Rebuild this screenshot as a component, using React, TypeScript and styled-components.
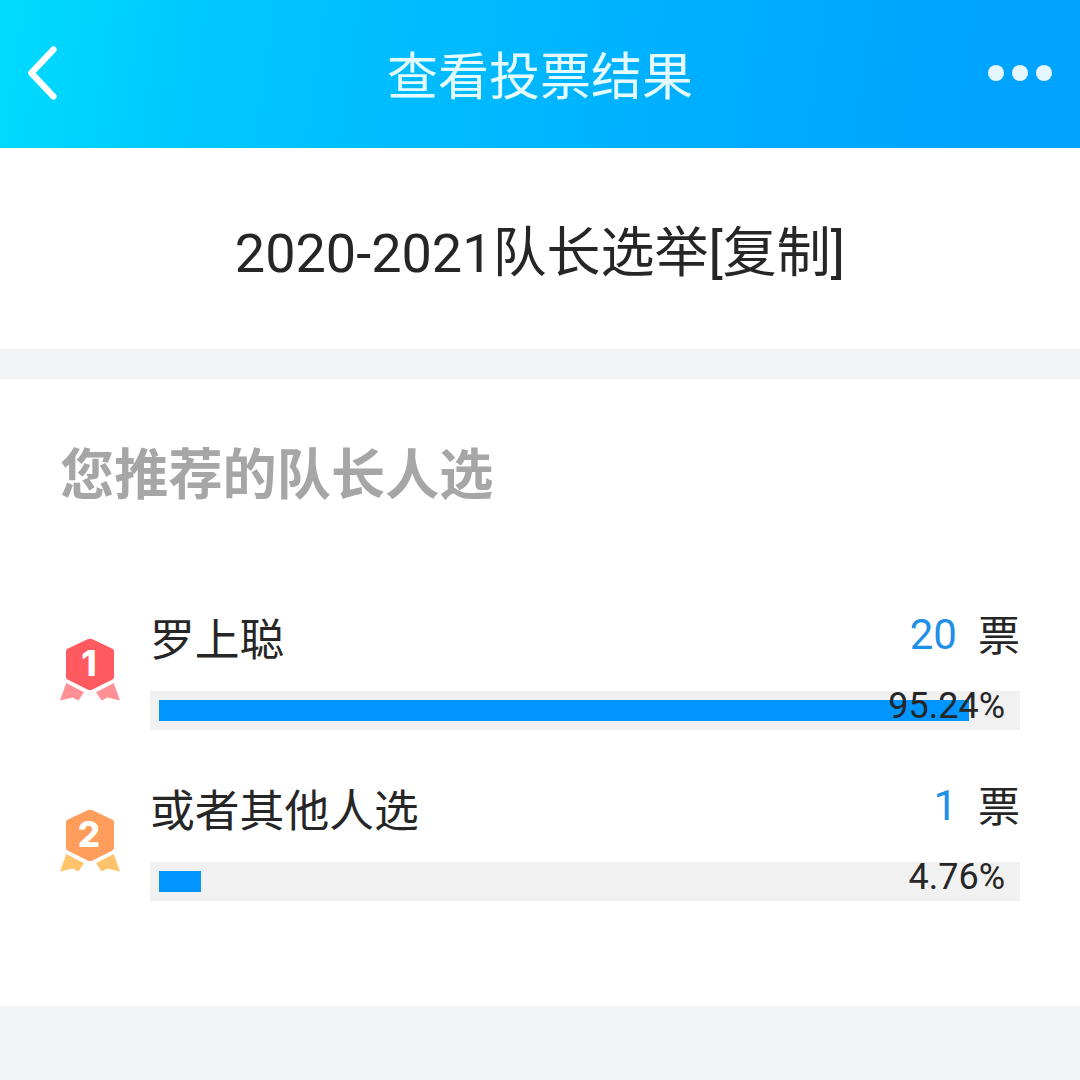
import React from "react";
import styled, { createGlobalStyle } from "styled-components";

const GlobalStyle = createGlobalStyle`
  * { box-sizing: border-box; }
  body {
    margin: 0;
    background: #f2f3f5;
    color: #262626;
    font-family: Roboto, "Noto Sans CJK SC", sans-serif;
  }
`;

const Page = styled.div`
  display: flex;
  flex-direction: column;
  width: 1080px;
  height: 1080px;
  overflow: hidden;
  background: #f2f3f5;
`;

const Header = styled.header`
  display: grid;
  grid-template-columns: 120px 1fr 120px;
  align-items: center;
  height: 148px;
  background: linear-gradient(98deg, #00dcff 0%, #00cbff 15%, #00beff 35%, #00aeff 65%, #00a5ff 85%, #00a3ff 100%);
`;

const HeaderTitle = styled.h1`
  margin: 8px 0 0;
  text-align: center;
  font-size: 51px;
  font-weight: 400;
  line-height: 74px;
  color: #e4fbff;
`;

const BackButton = styled.button`
  justify-self: start;
  display: flex;
  margin: 0 0 3px 22px;
  padding: 0;
  border: 0;
  background: none;
`;

const MoreButton = styled.button`
  justify-self: end;
  display: flex;
  gap: 8px;
  margin: 0 28px 2px 0;
  padding: 0;
  border: 0;
  background: none;
`;

const Dot = styled.span`
  width: 16px;
  height: 16px;
  border-radius: 50%;
  background: #e5f6ff;
`;

const TitleCard = styled.section`
  display: flex;
  align-items: center;
  justify-content: center;
  height: 201px;
  margin-bottom: 30px;
  padding-top: 10px;
  background: #fff;
`;

const PollTitle = styled.h2`
  margin: 0;
  font-size: 54px;
  font-weight: 400;
  line-height: 80px;
`;

const ResultCard = styled.section`
  height: 627px;
  padding: 57px 60px 0;
  background: #fff;
`;

const Question = styled.h3`
  margin: 0 0 89px;
  font-size: 54.2px;
  font-weight: 700;
  line-height: 80px;
  color: #a6a6a6;
`;

const Options = styled.ul`
  display: flex;
  flex-direction: column;
  gap: 46px;
  margin: 0;
  padding: 0;
  list-style: none;
`;

const Option = styled.li`
  display: grid;
  grid-template-columns: 60px 1fr;
  column-gap: 30px;
  height: 125px;
`;

const MedalSlot = styled.div`
  padding-top: 33px;
`;

const MedalIcon = styled.svg`
  display: block;
`;

const Rank = styled.text`
  font-family: Inter, Roboto, sans-serif;
  font-size: 35px;
  font-weight: 800;
  fill: #fff;
`;

const OptionBody = styled.div`
  display: flex;
  flex-direction: column;
  justify-content: space-between;
`;

const OptionHead = styled.div`
  display: flex;
  justify-content: space-between;
  height: 72px;
`;

const Name = styled.span`
  font-size: 44.8px;
  line-height: 72px;
`;

const Votes = styled.span`
  display: flex;
  gap: 21px;
  font-size: 42px;
  line-height: 60px;
`;

const Count = styled.span`
  color: #1e90e6;
`;

const Unit = styled.span`
  line-height: 64px;
`;

const Track = styled.div`
  position: relative;
  height: 39px;
  padding: 9px;
  background: #f1f1f1;
`;

const Fill = styled.div`
  height: 21px;
  background: #0095ff;
`;

const Percent = styled.span`
  position: absolute;
  top: -6px;
  right: 15px;
  font-size: 36px;
  line-height: 42px;
`;

const results = [
  { name: "罗上聪", votes: 20, percent: 95.24, color: "#ff5a5f", ribbon: "#ff9095" },
  { name: "或者其他人选", votes: 1, percent: 4.76, color: "#ff9e5c", ribbon: "#ffc46b" },
];

function Medal({ rank, color, ribbon }: { rank: number; color: string; ribbon: string }) {
  return (
    <MedalIcon width="60" height="64" viewBox="0 0 60 64">
      <path d="M6.3 45L24 54.3L18.3 62.5L12.5 59.5L0 62.5Z" fill={ribbon} />
      <path d="M53.7 45L36 54.3L41.7 62.5L47.5 59.5L60 62.5Z" fill={ribbon} />
      <path
        d="M27.5 1.2Q30 .1 32.5 1.2L52.5 10.8Q54 11.7 54 13.4V38.7Q54 40.6 52.4 41.5L32.5 51.5Q30 52.6 27.5 51.5L7.6 41.5Q6 40.6 6 38.7V13.4Q6 11.7 7.5 10.8Z"
        fill={color}
      />
      <Rank x="29" y="38" textAnchor="middle">
        {rank}
      </Rank>
    </MedalIcon>
  );
}

export default function App() {
  return (
    <>
      <GlobalStyle />
      <Page>
        <Header>
          <BackButton aria-label="返回">
            <svg width="40" height="60" viewBox="0 0 40 60" fill="none" stroke="#fff" strokeWidth="6.2" strokeLinecap="round" strokeLinejoin="round">
              <path d="M31.5 6.5L9.3 30L31.5 53.5" />
            </svg>
          </BackButton>
          <HeaderTitle>查看投票结果</HeaderTitle>
          <MoreButton aria-label="更多">
            <Dot />
            <Dot />
            <Dot />
          </MoreButton>
        </Header>
        <TitleCard>
          <PollTitle>2020-2021队长选举[复制]</PollTitle>
        </TitleCard>
        <ResultCard>
          <Question>您推荐的队长人选</Question>
          <Options>
            {results.map((item, index) => (
              <Option key={item.name}>
                <MedalSlot>
                  <Medal rank={index + 1} color={item.color} ribbon={item.ribbon} />
                </MedalSlot>
                <OptionBody>
                  <OptionHead>
                    <Name>{item.name}</Name>
                    <Votes>
                      <Count>{item.votes}</Count>
                      <Unit>票</Unit>
                    </Votes>
                  </OptionHead>
                  <Track>
                    <Fill style={{ width: Math.round(item.percent * 8.49 + 1.6) }} />
                    <Percent>{item.percent}%</Percent>
                  </Track>
                </OptionBody>
              </Option>
            ))}
          </Options>
        </ResultCard>
      </Page>
    </>
  );
}
